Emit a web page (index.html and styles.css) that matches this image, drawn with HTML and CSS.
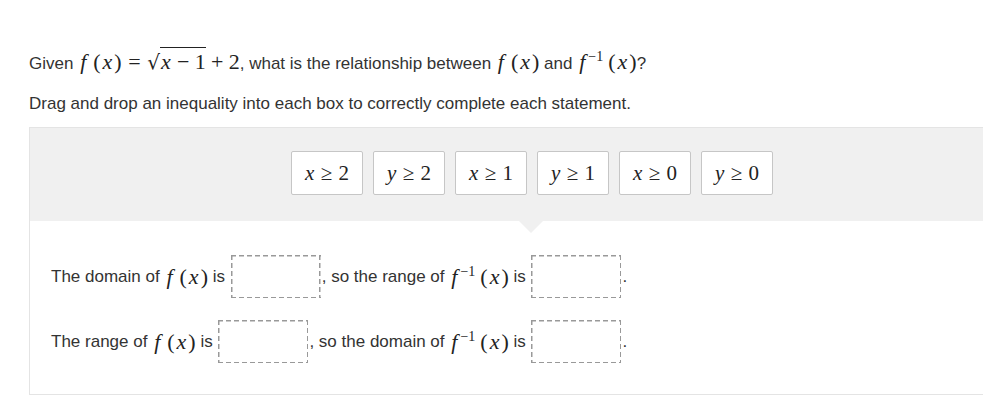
FILE: index.html
```html
<!DOCTYPE html>
<html>
<head>
<meta charset="utf-8">
<link rel="stylesheet" href="styles.css">
</head>
<body>
<div class="page">
  <p class="q">Given <span class="m"><i class="f">f</i><span class="p l">(</span><i class="x">x</i><span class="p r">)</span><span class="rel">=</span><span class="sq"><span class="rad">√</span><span class="under"><i class="x">x</i><span class="bin">−</span>1</span></span><span class="bin">+</span>2</span>, what is the relationship between <span class="m"><i class="f">f</i><span class="p l">(</span><i class="x">x</i><span class="p r">)</span></span> and <span class="m"><i class="fi">f</i><sup>−1</sup><span class="p l">(</span><i class="x">x</i><span class="p r">)</span></span>?</p>
  <p class="instr">Drag and drop an inequality into each box to correctly complete each statement.</p>
  <div class="panel">
    <div class="bank">
      <div class="tile"><span class="m t"><i>x</i><span class="rel">≥</span>2</span></div>
      <div class="tile"><span class="m t"><i>y</i><span class="rel">≥</span>2</span></div>
      <div class="tile"><span class="m t"><i>x</i><span class="rel">≥</span>1</span></div>
      <div class="tile"><span class="m t"><i>y</i><span class="rel">≥</span>1</span></div>
      <div class="tile"><span class="m t"><i>x</i><span class="rel">≥</span>0</span></div>
      <div class="tile"><span class="m t"><i>y</i><span class="rel">≥</span>0</span></div>
      <div class="arrow"></div>
    </div>
    <div class="stmts">
      <div class="row">The domain of <span class="m"><i class="f">f</i><span class="p l">(</span><i class="x">x</i><span class="p r">)</span></span> is <span class="drop"></span>, so the range of <span class="m"><i class="fi">f</i><sup>−1</sup><span class="p l">(</span><i class="x">x</i><span class="p r">)</span></span> is <span class="drop"></span>.</div>
      <div class="row">The range of <span class="m"><i class="f">f</i><span class="p l">(</span><i class="x">x</i><span class="p r">)</span></span> is <span class="drop"></span>, so the domain of <span class="m"><i class="fi">f</i><sup>−1</sup><span class="p l">(</span><i class="x">x</i><span class="p r">)</span></span> is <span class="drop"></span>.</div>
    </div>
  </div>
</div>
</body>
</html>
```
FILE: styles.css
```css
html, body {
  margin: 0;
  padding: 0;
  background: #ffffff;
  overflow: hidden;
}
body {
  font-family: "Liberation Sans", Arial, sans-serif;
  font-size: 17px;
  color: #333333;
}
.page {
  padding: 0 0 0 29px;
  width: 1010px;
}
.q {
  margin: 0;
  padding-top: 52px;
  line-height: 24px;
  white-space: nowrap;
}
.instr {
  margin: 16px 0 0 0;
  line-height: 24px;
}
.m {
  font-family: "Liberation Serif", "Times New Roman", serif;
  font-size: 22px;
  line-height: 20px;
  color: #222;
  white-space: nowrap;
}
.m.t {
  font-size: 21px;
}
.m i {
  font-style: italic;
}
.m i.f {
  margin: 0 5px 0 2px;
}
.m i.fi {
  margin-left: 2px;
}
.m i.x {
  margin: 0 1px;
}
.m .p {
  font-style: normal;
}
.m .p.l {
  margin: 0 1px 0 2px;
}
.m .p.r {
  margin: 0 0 0 1px;
}
.rel {
  margin: 0 0.3em;
}
.bin {
  margin: 0 0.24em;
}
.m sup {
  font-size: 14px;
  vertical-align: 8px;
  line-height: 0;
  margin-left: 3px;
  margin-right: 3px;
}
.sq {
  display: inline-block;
  white-space: nowrap;
}
.rad {
  font-family: "DejaVu Serif", serif;
  font-size: 20px;
}
.under {
  border-top: 1px solid #222;
  padding-top: 1px;
}
.panel {
  margin-top: 11px;
  border: 1px solid #e4e4e4;
  border-right: none;
  width: 1004px;
}
.bank {
  position: relative;
  background: #f0f0f0;
  display: flex;
  justify-content: center;
  gap: 10px;
  padding: 23px 0 26px 0;
}
.tile {
  width: 70px;
  height: 42px;
  background: #ffffff;
  border: 1px solid #c6c6c6;
  border-radius: 2px;
  display: flex;
  align-items: center;
  justify-content: center;
}
.arrow {
  position: absolute;
  left: 489px;
  bottom: -12px;
  width: 0;
  height: 0;
  border-left: 12px solid transparent;
  border-right: 12px solid transparent;
  border-top: 12px solid #f0f0f0;
}
.stmts {
  padding: 34px 0 31px 21px;
  display: flex;
  flex-direction: column;
  gap: 22px;
}
.row {
  display: flex;
  align-items: center;
  white-space: pre;
  height: 43px;
}
.drop {
  display: inline-block;
  height: 43px;
  width: 90px;
  margin: 0 1px;
  background:
    repeating-linear-gradient(90deg, #999 0 5px, transparent 5px 8px) top left / 100% 1.5px no-repeat,
    repeating-linear-gradient(90deg, #999 0 5px, transparent 5px 8px) bottom left / 100% 1.5px no-repeat,
    repeating-linear-gradient(180deg, #999 0 5px, transparent 5px 8px) top left / 1.5px 100% no-repeat,
    repeating-linear-gradient(180deg, #999 0 5px, transparent 5px 8px) top right / 1.5px 100% no-repeat;
}
```
